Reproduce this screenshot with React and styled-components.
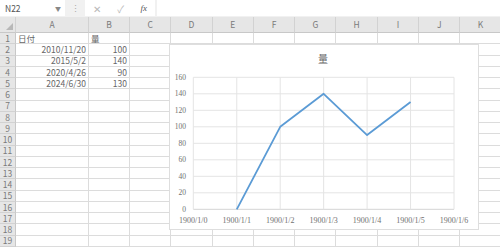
import React from 'react';
import styled, { createGlobalStyle } from 'styled-components';

const GlobalStyle = createGlobalStyle`
  html, body { margin: 0; padding: 0; background: #ffffff; }
  body { font-family: "Noto Sans CJK JP", "Noto Sans", sans-serif; }
`;

const columns = ['A', 'B', 'C', 'D', 'E', 'F', 'G', 'H', 'I', 'J', 'K'];
const colWidths = ['73px', '41px', ...Array(9).fill('41.3px')];
const gridCols = `16px ${colWidths.join(' ')}`;

const data = [
  ['日付', '量'],
  ['2010/11/20', '100'],
  ['2015/5/2', '140'],
  ['2020/4/26', '90'],
  ['2024/6/30', '130'],
];

const values = [0, 100, 140, 90, 130];

const Sheet = styled.div`
  position: relative;
  width: 500px;
  height: 248px;
  overflow: hidden;
  background: #ffffff;
`;

const FormulaBar = styled.div`
  display: flex;
  height: 16px;
  padding-bottom: 1px;
  background: #f1f1f1;
`;

const NameBox = styled.div`
  width: 65px;
  display: flex;
  align-items: center;
  justify-content: space-between;
  padding: 0 4px 0 5px;
  box-sizing: border-box;
  background: #fff;
  font-size: 8.5px;
  color: #555;
  span { font-size: 6px; color: #888; }
`;

const Dots = styled.div`
  width: 20px;
  display: flex;
  align-items: center;
  justify-content: center;
  color: #aaa;
  font-size: 9px;
`;

const IconBox = styled.div`
  width: 70px;
  display: flex;
  align-items: center;
  justify-content: space-around;
  background: #fff;
  color: #b8b8b8;
  font-size: 10px;
  i { font-family: "Liberation Serif", serif; color: #555; font-size: 9px; }
`;

const FormulaInput = styled.div`
  flex: 1;
  margin-left: 2px;
  background: #fff;
`;

const Row = styled.div`
  display: grid;
  grid-template-columns: ${gridCols};
  height: ${(p) => p.$h};
`;

const HeadCell = styled.div`
  display: flex;
  align-items: center;
  justify-content: center;
  background: #e6e6e6;
  color: #7a7a7a;
  font-size: 8.5px;
  box-sizing: border-box;
  border-right: 1px solid #d2d2d2;
  border-bottom: 1px solid #c8c8c8;
  position: relative;
  line-height: 1;
`;

const Corner = styled(HeadCell)`
  &::after {
    content: '';
    position: absolute;
    right: 2px;
    bottom: 2px;
    border-left: 7px solid transparent;
    border-bottom: 7px solid #b8b8b8;
  }
`;

const RowHead = styled.div`
  display: flex;
  align-items: center;
  justify-content: center;
  background: #e6e6e6;
  color: #7a7a7a;
  font-size: 8.5px;
  box-sizing: border-box;
  border-right: 1px solid #c8c8c8;
  border-bottom: 1px solid #d2d2d2;
  line-height: 1;
`;

const Cell = styled.div`
  display: flex;
  align-items: center;
  justify-content: ${(p) => (p.$right ? 'flex-end' : 'flex-start')};
  padding: 0 2px;
  box-sizing: border-box;
  border-right: 1px solid #dcdcdc;
  border-bottom: 1px solid #dcdcdc;
  font-size: 8.5px;
  color: #666;
  line-height: 1;
  white-space: nowrap;
  overflow: hidden;
`;

const ChartBox = styled.div`
  position: absolute;
  left: 170px;
  top: 45px;
  width: 308px;
  height: 184px;
  background: #fff;
  box-shadow: 0 0 0 1px #dedede;
`;

const AxisText = styled.text`
  font-family: "Liberation Serif", "DejaVu Serif", serif;
  font-size: ${(p) => p.$size}px;
  fill: #707070;
`;

const TitleText = styled.text`
  font-family: "Noto Sans CJK JP", sans-serif;
  font-size: 10px;
  fill: #666;
`;

function Chart() {
  const left = 23.3;
  const right = 284;
  const bottom = 164.3;
  const perUnit = 0.825;
  const step = 43.45;
  const ys = [0, 20, 40, 60, 80, 100, 120, 140, 160];
  const xs = [0, 1, 2, 3, 4, 5, 6];
  const pts = values.map((v, i) => `${left + (i + 1) * step},${bottom - v * perUnit}`).join(' ');
  return (
    <ChartBox>
      <svg width="308" height="184" viewBox="0 0 308 184">
        <TitleText x="153" y="18" textAnchor="middle">量</TitleText>
        {ys.map((v) => (
          <g key={v}>
            <line x1={left} x2={right} y1={bottom - v * perUnit} y2={bottom - v * perUnit}
              stroke={v === 0 ? '#d4d4d4' : '#e4e4e4'} strokeWidth="1" />
            <AxisText $size={7.5} x="16" y={bottom - v * perUnit + 2.6} textAnchor="end">{v}</AxisText>
          </g>
        ))}
        {xs.map((i) => (
          <g key={i}>
            <line x1={left + i * step} x2={left + i * step} y1={bottom - 160 * perUnit} y2={bottom}
              stroke="#e4e4e4" strokeWidth="1" />
            <AxisText $size={8} x={left + i * step} y="177.5" textAnchor="middle">{`1900/1/${i}`}</AxisText>
          </g>
        ))}
        <polyline points={pts} fill="none" stroke="#5b9bd5" strokeWidth="1.8" strokeLinejoin="round" />
      </svg>
    </ChartBox>
  );
}

export default function App() {
  const rows = Array.from({ length: 19 }, (_, i) => i + 1);
  return (
    <Sheet>
      <GlobalStyle />
      <FormulaBar>
        <NameBox>N22<span>▼</span></NameBox>
        <Dots>⋮</Dots>
        <IconBox>
          <span>✕</span>
          <span>✓</span>
          <i>fx</i>
        </IconBox>
        <FormulaInput />
      </FormulaBar>
      <Row $h="16px">
        <Corner />
        {columns.map((c) => <HeadCell key={c}>{c}</HeadCell>)}
      </Row>
      {rows.map((r) => {
        const d = data[r - 1] || [];
        return (
          <Row key={r} $h="11.26px">
            <RowHead>{r}</RowHead>
            {columns.map((c, ci) => (
              <Cell key={c} $right={r > 1}>{d[ci] || ''}</Cell>
            ))}
          </Row>
        );
      })}
      <Chart />
    </Sheet>
  );
}
